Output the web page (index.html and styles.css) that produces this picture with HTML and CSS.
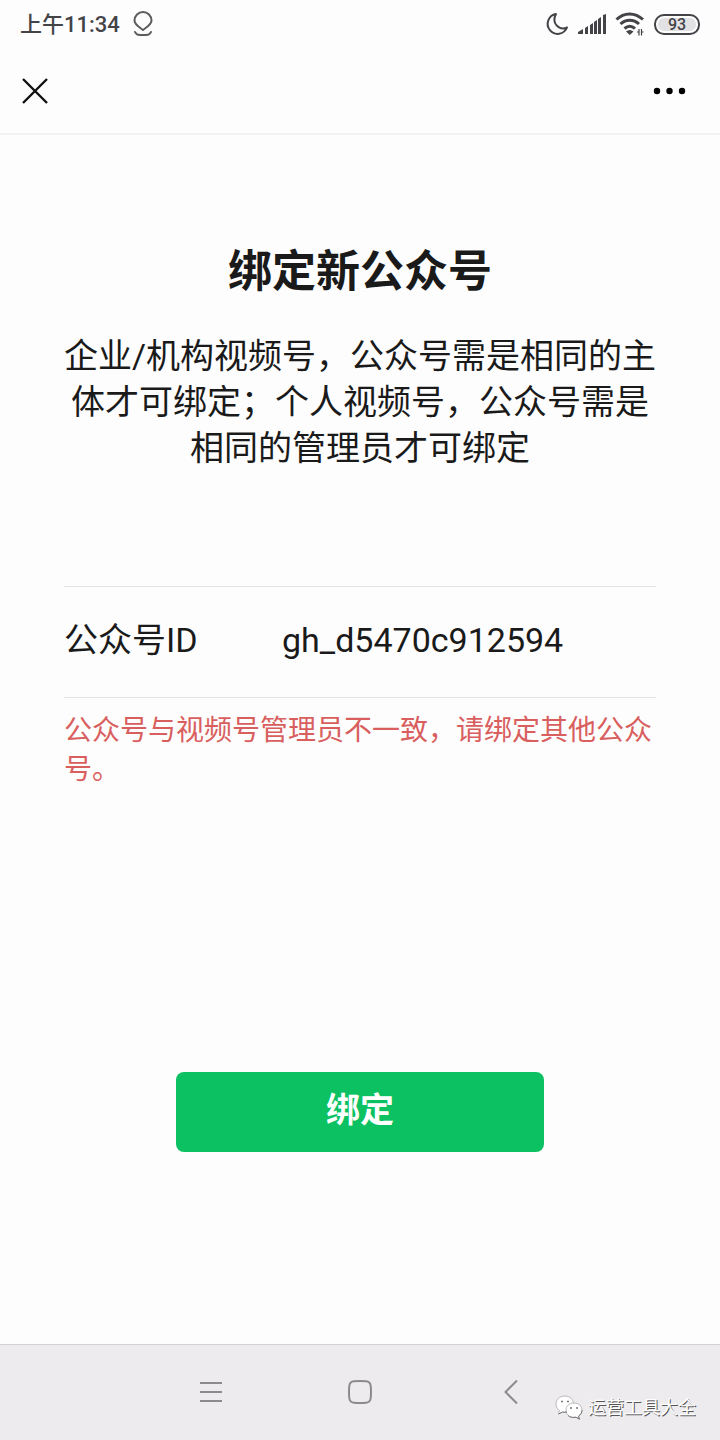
FILE: index.html
```html
<!DOCTYPE html>
<html lang="zh-CN">
<head>
  <meta charset="UTF-8">
  <meta name="viewport" content="width=device-width, initial-scale=1.0">
  <title>绑定新公众号</title>
  <link rel="stylesheet" href="styles.css">
</head>
<body>
<div class="page">
  <div class="status-bar">
    <div class="status-left">
      <span class="time">上午11:34</span>
      <svg class="icon" width="20" height="26" viewBox="0 0 20 26" fill="none" stroke="#5c5c5f" stroke-width="2" stroke-linecap="round" stroke-linejoin="round">
        <path d="M10 19C8 17 1.500 14 1.500 9.500a8.500 8.500 0 0 1 17 0C18.500 14 12 17 10 19z"/>
        <path d="M2 21C3 23.500 5 24 7 24h6c2 0 4-.500 5-3"/>
      </svg>
    </div>
    <div class="status-right">
      <svg class="icon" width="24" height="24" viewBox="0 0 24 24" fill="none" stroke="#444448" stroke-width="2" stroke-linejoin="round">
        <path d="M11 2A10 10 0 1 0 22 15.500C14 19 6 11 11 2z"/>
      </svg>
      <svg class="icon" width="28" height="22" viewBox="0 0 28 22" fill="#444448">
        <path d="M0 21v-2l5-3v5zM7 21v-6l3-2v8zM12 21v-9l3-2v11zM16 21V9l3-2v14zM20 21V6l3-2v17zM25 21V2l3-1v20z"/>
      </svg>
      <svg class="icon" width="30" height="24" viewBox="0 0 30 24" fill="none" stroke="#444448" stroke-width="3">
        <path d="M1.500 7.500C9 0 20 0 28 7.500M5.500 12c5.500-5 13-5 18.500 0M9.500 16.500c3.500-3 7-3 10.500 0"/>
        <path d="M11 19.500c2.500-2 5-2 7.500 0L14.800 23z" fill="#444448" stroke="none"/>
        <path d="M24 17v6.500M26.500 17v6.500M22 20h2M26.500 20h2" stroke-width="1.200"/>
      </svg>
      <span class="battery">93</span>
    </div>
  </div>

  <header class="top-bar">
    <button type="button" class="icon-button" aria-label="关闭">
      <svg class="icon" width="26" height="26" viewBox="0 0 26 26" fill="none" stroke="#111" stroke-width="2.400">
        <path d="M1 1l24 24M25 1L1 25"/>
      </svg>
    </button>
    <button type="button" class="icon-button" aria-label="更多">
      <svg class="icon" width="34" height="8" viewBox="0 0 34 8" fill="#000">
        <circle cx="4" cy="4" r="3.200"/>
        <circle cx="16.500" cy="4" r="3.200"/>
        <circle cx="29" cy="4" r="3.200"/>
      </svg>
    </button>
  </header>

  <main class="content">
    <h1 class="title">绑定新公众号</h1>
    <p class="desc">企业/机构视频号，公众号需是相同的主体才可绑定；个人视频号，公众号需是相同的管理员才可绑定</p>

    <form class="bind-form">
      <div class="field">
        <label class="field-label" for="accountId">公众号ID</label>
        <input class="field-input" type="text" id="accountId" value="gh_d5470c912594">
      </div>
      <p class="error-message">公众号与视频号管理员不一致，请绑定其他公众号。</p>
      <button type="button" class="btn-primary">绑定</button>
    </form>
  </main>

  <nav class="system-nav">
    <button type="button" class="icon-button" aria-label="菜单">
      <svg class="icon" width="24" height="24" viewBox="0 0 24 24" fill="none" stroke="#8b8a8d" stroke-width="2">
        <path d="M1 3h22M1 12h22M1 21h22"/>
      </svg>
    </button>
    <button type="button" class="icon-button" aria-label="主页">
      <svg class="icon" width="24" height="24" viewBox="0 0 24 24" fill="none" stroke="#8b8a8d" stroke-width="2">
        <path d="M6 1.300Q12 .700 18 1.300Q22.300 1.700 22.700 6Q23.300 12 22.700 18Q22.300 22.300 18 22.700Q12 23.300 6 22.700Q1.700 22.300 1.300 18Q.700 12 1.300 6Q1.700 1.700 6 1.300z"/>
      </svg>
    </button>
    <button type="button" class="icon-button" aria-label="返回">
      <svg class="icon" width="24" height="24" viewBox="0 0 24 24" fill="none" stroke="#8b8a8d" stroke-width="2">
        <path d="M20 .500L8.500 12 20 23.500"/>
      </svg>
    </button>
    <div class="watermark">
      <svg class="icon" width="28" height="26" viewBox="0 0 28 26" fill="#fff" stroke="#b9b8bb" stroke-width="1">
        <path d="M10 1C4.500 1 1 4.500 1 9c0 3 1.500 5 3.500 6.500L3.500 19l4-2c5 1 11-1.500 11-8C18.500 4.500 15 1 10 1z"/>
        <path d="M19 8c-5 0-8 3.200-8 7.200 0 5 4.500 8 10 7l3.500 2-1-3c2-1.500 3.500-3.300 3.500-6C27 11.200 24 8 19 8z"/>
        <path d="M3.500 19l4-2c1.500.400 3 .300 4.500 0M13 20.500c2 2 5 2.300 8 1.700l3.500 2-1-3c2-1.500 3.500-3.300 3.500-6" fill="none" stroke="#777"/>
        <path d="M6 6.500h2M12 6.500h2M15 13h2M21 13h2" stroke="#777" stroke-width="1.500"/>
      </svg>
      <span>运营工具大全</span>
    </div>
  </nav>
</div>
</body>
</html>
```
FILE: styles.css
```css
* {
  margin: 0;
  padding: 0;
  box-sizing: border-box;
}

body {
  font-family: Roboto, 'Noto Sans CJK SC', sans-serif;
  background: #fdfdfd;
  color: #1a1a1a;
}

.page {
  display: flex;
  flex-direction: column;
  min-height: 100vh;
}

.icon {
  display: block;
  flex: none;
}

.icon-button {
  border: none;
  background: none;
  cursor: pointer;
}

.status-bar {
  display: flex;
  align-items: center;
  justify-content: space-between;
  height: 48px;
  padding: 0 20px;
}

.status-left {
  display: flex;
  align-items: center;
  gap: 13px;
}

.time {
  padding-top: 2px;
  font-size: 22px;
  font-weight: 500;
  line-height: 28px;
  color: #444448;
}

.status-right {
  display: flex;
  align-items: center;
  gap: 9px;
}

.battery {
  width: 46px;
  height: 21px;
  border: 2px solid #444448;
  border-radius: 10px;
  background: #e2e2e4;
  box-shadow: inset 0 0 0 2px #fdfdfd;
  color: #444448;
  font-size: 16px;
  font-weight: 500;
  line-height: 17px;
  text-align: center;
}

.top-bar {
  display: flex;
  align-items: center;
  justify-content: space-between;
  height: 87px;
  padding: 0 33px 0 22px;
  border-bottom: 2px solid #f3f3f3;
}

.content {
  flex: 1;
  padding: 105px 60px 0;
}

.title {
  font-size: 44px;
  font-weight: 700;
  line-height: 64px;
  text-align: center;
}

.desc {
  margin-top: 29px;
  font-size: 34px;
  line-height: 46px;
  text-align: center;
}

.bind-form {
  margin: 115px 4px 0;
}

.field {
  display: flex;
  align-items: baseline;
  height: 112px;
  padding-top: 30px;
  border-top: 1px solid #e4e4e4;
  border-bottom: 1px solid #e4e4e4;
  font-size: 34px;
  line-height: 46px;
}

.field-label {
  width: 218px;
}

.field-input {
  flex: 1;
  min-width: 0;
  border: none;
  outline: none;
  background: none;
  color: inherit;
  font: inherit;
}

.error-message {
  margin-top: 13px;
  color: #d95f5f;
  font-size: 28px;
  line-height: 39px;
}

.btn-primary {
  display: block;
  width: 368px;
  max-width: 100%;
  height: 80px;
  margin: 283px auto 48px;
  padding-bottom: 10px;
  border: none;
  border-radius: 8px;
  background: #0bc162;
  color: #fff;
  font-family: inherit;
  font-size: 34px;
  font-weight: 700;
  cursor: pointer;
}

.system-nav {
  position: relative;
  display: flex;
  align-items: center;
  justify-content: center;
  gap: 125px;
  height: 96px;
  padding-bottom: 2px;
  border-top: 1px solid #d2d1d3;
  background: #edebee;
}

/* account mark, sits over the navigation bar */
.watermark {
  position: absolute;
  right: 24px;
  bottom: 18px;
  display: flex;
  align-items: center;
  gap: 5px;
  color: #fff;
  font-size: 18px;
  line-height: 28px;
  text-shadow: 1px 1px 0 #555;
}
```
